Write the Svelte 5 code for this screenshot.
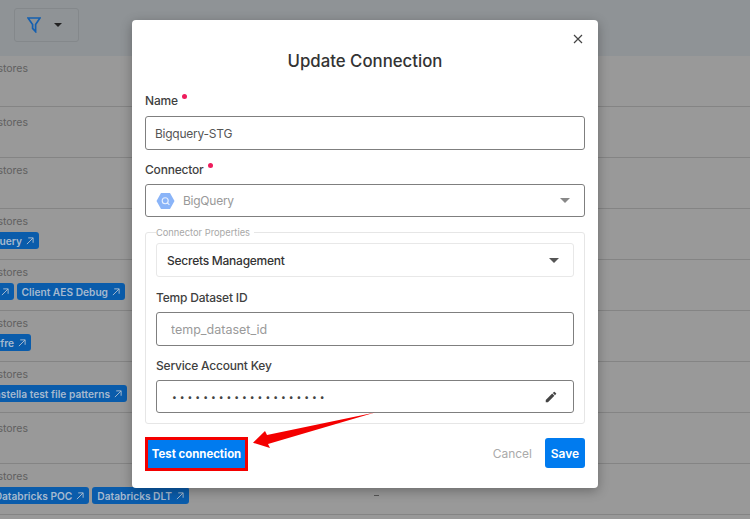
<script lang="ts">
  // 背景のテーブル行(モーダルの後ろで暗くなっている部分)
  interface Tag { label: string }
  interface Row { top: number; end: number; tags: Tag[]; dash?: boolean }

  const rows: Row[] = [
    { top: 7, end: 0, tags: [] },
    { top: 10, end: 0, tags: [] },
    { top: 7, end: 0, tags: [] },
    { top: 7, end: 39, tags: [{ label: 'BigQuery' }] },
    { top: 7, end: 125, tags: [{ label: 'Snowflake' }, { label: 'Client AES Debug' }] },
    { top: 7, end: 31, tags: [{ label: 'Snowfre' }] },
    { top: 7, end: 127, tags: [{ label: 'Constella test file patterns' }] },
    { top: 10, end: 0, tags: [] },
    { top: 7, end: 189, tags: [{ label: 'Databricks POC' }, { label: 'Databricks DLT' }], dash: true },
  ];

  const keyLength = 20;
</script>

<div class="page">
  <header class="toolbar">
    <button type="button" class="filter">
      <svg width="14" height="16" viewBox="0 0 14 16" fill="none" stroke="#1560b0" stroke-width="1.7">
        <path d="M1 1h12L8.6 7.4V14.6L5.6 11.4V7.4z" stroke-linejoin="miter" />
      </svg>
      <span class="caret dark"></span>
    </button>
  </header>

  <div class="table">
    {#each rows as row}
      <div class="row" style="padding-top: {row.top}px">
        <div class="stores">stores</div>
        {#if row.tags.length}
          <div class="tags" style="width: {row.end}px">
            {#each row.tags as tag}
              <span class="tag">
                {tag.label}
                <svg width="8" height="8" viewBox="0 0 9 9" fill="none" stroke="currentColor" stroke-width="1.1">
                  <path d="M1 8 8 1M2.5 1H8V6.5" />
                </svg>
              </span>
            {/each}
          </div>
        {/if}
        {#if row.dash}
          <span class="dash"></span>
        {/if}
      </div>
    {/each}
  </div>

  <div class="modal">
    <button type="button" class="close" aria-label="Close">
      <svg width="10" height="10" viewBox="0 0 10 10" stroke="#444" stroke-width="1.2">
        <path d="M1 1l8 8M9 1L1 9" />
      </svg>
    </button>
    <h2 class="title">Update Connection</h2>

    <div class="label first">Name <i class="req"></i></div>
    <input class="input" value="Bigquery-STG" />

    <div class="label second">Connector <i class="req"></i></div>
    <div class="input select short">
      <svg class="hex" width="19" height="18" viewBox="0 0 19 18">
        <path d="M5 1h9l4.5 8-4.5 8H5L.5 9z" fill="#8ab4f8" />
        <circle cx="9.2" cy="8.7" r="3" fill="none" stroke="#e8f0fe" stroke-width="1.1" />
        <path d="M11.4 10.9l2 2" stroke="#e8f0fe" stroke-width="1.1" />
      </svg>
      <span class="muted">BigQuery</span>
      <span class="caret"></span>
    </div>

    <fieldset class="props">
      <legend>Connector Properties</legend>
      <div class="input select light">
        <span class="strong">Secrets Management</span>
        <span class="caret dark2"></span>
      </div>
      <div class="label inner temp">Temp Dataset ID</div>
      <input class="input wide" placeholder="temp_dataset_id" />
      <div class="label inner">Service Account Key</div>
      <div class="input key short">
        <span class="dots">{'•'.repeat(keyLength)}</span>
        <svg width="14" height="14" viewBox="0 0 24 24" fill="#444">
          <path d="M3 17.25V21h3.75L17.81 9.94l-3.75-3.75L3 17.25zM20.71 7.04a1 1 0 0 0 0-1.41l-2.34-2.34a1 1 0 0 0-1.41 0l-1.83 1.83 3.75 3.75 1.83-1.83z" />
        </svg>
      </div>
    </fieldset>

    <div class="footer">
      <button type="button" class="test">Test connection</button>
      <div class="actions">
        <button type="button" class="cancel">Cancel</button>
        <button type="button" class="save">Save</button>
      </div>
    </div>
  </div>

  <!-- 注釈の赤い矢印 -->
  <svg class="arrow" width="130" height="40" viewBox="0 0 130 40">
    <path d="M125 1.5 L17 24 L15 20 L3 31.7 L20 37 L18 33z" fill="#f40000" />
  </svg>
</div>

<style>
  :global(body) {
    margin: 0;
    background: #999;
    font-family: Inter, 'Liberation Sans', sans-serif;
  }

  .page {
    position: relative;
    width: 750px;
    height: 519px;
    overflow: hidden;
    background: #999;
  }

  .toolbar {
    height: 56px;
    background: #8f9396;
    padding: 8px 14px 0;
    box-sizing: border-box;
  }

  .filter {
    display: flex;
    align-items: center;
    gap: 13px;
    width: 65px;
    height: 34px;
    padding: 0 0 0 12px;
    box-sizing: border-box;
    background: transparent;
    border: 1px solid #84888b;
    border-radius: 3px;
  }

  .caret {
    width: 0;
    height: 0;
    border-left: 5px solid transparent;
    border-right: 5px solid transparent;
    border-top: 5px solid #888;
  }

  .caret.dark {
    border-left-width: 4px;
    border-right-width: 4px;
    border-top: 4px solid #222;
  }

  .caret.dark2 {
    border-top-color: #555;
  }

  .row {
    position: relative;
    height: 51px;
    box-sizing: border-box;
    border-bottom: 1px solid #848484;
    font-size: 10.5px;
    color: #606060;
  }

  .stores {
    width: 28px;
    display: flex;
    justify-content: flex-end;
    line-height: 12px;
  }

  .tags {
    display: flex;
    justify-content: flex-end;
    gap: 3px;
    margin-top: 4px;
  }

  .tag {
    flex: none;
    display: inline-flex;
    align-items: center;
    gap: 4px;
    height: 17px;
    padding: 0 5px;
    border-radius: 3px;
    background: #0a5cab;
    color: #a5b9cf;
    font-size: 10.2px;
    font-weight: 600;
    white-space: nowrap;
  }

  .dash {
    position: absolute;
    left: 374px;
    top: 31px;
    width: 5px;
    height: 1px;
    background: #555;
  }

  .modal {
    position: absolute;
    left: 132px;
    top: 20px;
    width: 466px;
    height: 468px;
    box-sizing: border-box;
    padding: 0 13px;
    background: #fff;
    border-radius: 4px;
    box-shadow: 0 3px 12px rgba(0, 0, 0, 0.3);
  }

  .close {
    position: absolute;
    top: 14px;
    right: 15px;
    padding: 0;
    border: 0;
    background: none;
    line-height: 0;
  }

  .title {
    margin: 0;
    padding-top: 30px;
    text-align: center;
    font-size: 16.8px;
    line-height: 22px;
    font-weight: 500;
    color: #333;
  }

  .label {
    font-size: 12px;
    font-weight: 500;
    letter-spacing: -0.2px;
    line-height: 16px;
    color: #3f3f3f;
  }

  .label.first {
    margin-top: 21px;
    margin-bottom: 7px;
  }

  .label.second {
    margin-top: 12px;
    margin-bottom: 6px;
  }

  .label.inner {
    margin-top: 12px;
    margin-bottom: 6px;
  }

  .label.temp {
    margin-top: 13px;
  }

  .req {
    display: inline-block;
    width: 5px;
    height: 5px;
    margin-left: 1px;
    border-radius: 50%;
    background: #ee1c5c;
    vertical-align: 6px;
  }

  .input {
    display: flex;
    align-items: center;
    width: 100%;
    height: 34px;
    box-sizing: border-box;
    padding: 0 9px;
    border: 1px solid #7f7f7f;
    border-radius: 3px;
    background: #fff;
    font: inherit;
    font-size: 12px;
    letter-spacing: -0.25px;
    color: #555;
    outline: none;
  }

  .input.short {
    height: 33px;
  }

  .input::placeholder {
    color: #9a9a9a;
    letter-spacing: 0;
    font-size: 12.5px;
  }

  .input.wide {
    padding-left: 14px;
  }

  .select {
    gap: 8px;
    padding-left: 10px;
  }

  .select .caret {
    margin-left: auto;
    margin-right: 5px;
  }

  .select.light {
    border-color: #e8e8e8;
  }

  .hex {
    flex: none;
  }

  .muted {
    color: #999;
  }

  .strong {
    font-weight: 500;
    color: #333;
  }

  .props {
    margin: 10px 0 0;
    padding: 5px 10px 0;
    height: 197px;
    box-sizing: border-box;
    border: 1px solid #e6e6e6;
    border-radius: 3px;
    min-width: 0;
  }

  .props legend {
    margin-left: 0;
    padding: 0 4px 0 0;
    font-size: 9.3px;
    line-height: 11px;
    color: #a8a8a8;
  }

  .key {
    justify-content: space-between;
    padding: 0 15px;
  }

  .dots {
    font-size: 8.5px;
    letter-spacing: 3px;
    color: #444;
  }

  .footer {
    display: flex;
    justify-content: space-between;
    align-items: flex-start;
    margin-top: 13px;
  }

  .test {
    width: 103px;
    height: 34px;
    padding: 0;
    box-sizing: border-box;
    border: 3px solid #f40000;
    background: #007bef;
    color: #fff;
    font: inherit;
    font-size: 11.4px;
    font-weight: 700;
  }

  .actions {
    display: flex;
    align-items: center;
    gap: 13px;
    margin-top: 1px;
  }

  .cancel {
    padding: 0;
    border: 0;
    background: none;
    font: inherit;
    font-size: 12px;
    color: #aaa;
  }

  .save {
    width: 40px;
    height: 30px;
    padding: 0;
    border: 0;
    border-radius: 3px;
    background: #007bef;
    color: #fff;
    font: inherit;
    font-size: 12px;
    font-weight: 600;
  }

  .arrow {
    position: absolute;
    left: 250px;
    top: 411px;
  }
</style>
